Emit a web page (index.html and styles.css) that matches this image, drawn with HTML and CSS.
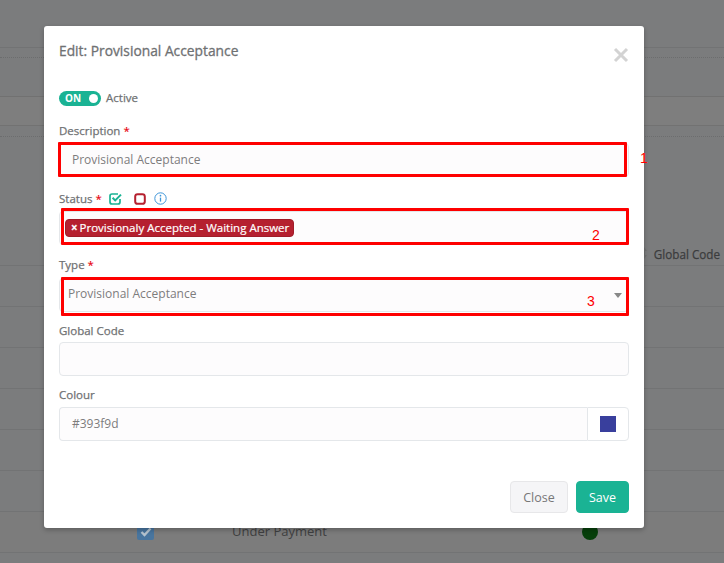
FILE: index.html
```html
<!DOCTYPE html>
<html lang="en">
<head>
<meta charset="utf-8">
<title>Edit: Provisional Acceptance</title>
<link rel="stylesheet" href="styles.css">
</head>
<body>
<div class="page">
  <div class="backdrop">
    <div class="band b1"></div>
    <div class="band b2"></div>
    <div class="band b3"></div>
    <div class="band b4"></div>
    <div class="band b5"></div>
    <div class="band b6">
      <svg class="sort" width="6" height="12" viewBox="0 0 6 12"><path d="M3 0l3 4H4v4h2l-3 4-3-4h2V4H0z" fill="#707172"/></svg>
      <span class="head-text">Global Code</span>
    </div>
    <div class="band row"></div>
    <div class="band row"></div>
    <div class="band row"></div>
    <div class="band row"></div>
    <div class="band row"></div>
    <div class="band row"></div>
    <div class="band row last">
      <span class="check"><svg width="12" height="10" viewBox="0 0 12 10"><path d="M1.5 5l3 3 6-6.5" fill="none" stroke="#b5c3cf" stroke-width="2.4"/></svg></span>
      <span class="row-text">Under Payment</span>
      <span class="dot"></span>
    </div>
  </div>

  <div class="modal">
    <header class="modal-head">
      <h1 class="modal-title">Edit: Provisional Acceptance</h1>
      <svg class="close-x" width="16" height="16" viewBox="0 0 16 16"><path d="M2 2l12 12M14 2L2 14" stroke="#d3d3d3" stroke-width="3" fill="none"/></svg>
    </header>
    <div class="toggle-row">
      <span class="toggle"><span class="toggle-on">ON</span><span class="toggle-knob"></span></span>
      <span class="toggle-label">Active</span>
    </div>

    <div class="field f-desc">
      <label class="label">Description <span class="req">*</span></label>
      <div class="input desc-input"><span class="value">Provisional Acceptance</span></div>
    </div>

    <div class="field f-status">
      <div class="label status-label">
        <span>Status <span class="req">*</span></span>
        <svg class="ico-check" width="13" height="13" viewBox="0 0 13 13"><path d="M11 7v3a2 2 0 0 1-2 2H3a2 2 0 0 1-2-2V4a2 2 0 0 1 2-2h6" fill="none" stroke="#1ab394" stroke-width="1.7"/><path d="M3.6 5.8l2.6 2.6L12 2.6" fill="none" stroke="#1ab394" stroke-width="2"/></svg>
        <svg class="ico-box" width="12" height="12" viewBox="0 0 12 12"><rect x="1.2" y="1.2" width="9.6" height="9.6" rx="2.4" fill="none" stroke="#b5202f" stroke-width="2"/></svg>
        <svg class="ico-info" width="13" height="13" viewBox="0 0 13 13"><circle cx="6.5" cy="6.5" r="5.7" fill="none" stroke="#3d95d8" stroke-width="1"/><path d="M6.5 5.6v4" stroke="#3d95d8" stroke-width="1.3" fill="none"/><circle cx="6.5" cy="3.7" r=".85" fill="#3d95d8"/></svg>
      </div>
      <div class="input tags"><span class="tag"><span class="tag-x">×</span>Provisionaly Accepted - Waiting Answer</span></div>
    </div>

    <div class="field f-type">
      <label class="label">Type <span class="req">*</span></label>
      <div class="input select"><span class="value">Provisional Acceptance</span><span class="caret"></span></div>
    </div>

    <div class="field f-global">
      <label class="label">Global Code</label>
      <div class="input"></div>
    </div>

    <div class="field f-colour">
      <label class="label">Colour</label>
      <div class="input-group">
        <div class="input grow"><span class="value">#393f9d</span></div>
        <div class="addon"><span class="swatch"></span></div>
      </div>
    </div>

    <footer class="modal-foot">
      <button class="btn btn-close" type="button">Close</button>
      <button class="btn btn-save" type="button">Save</button>
    </footer>
  </div>

  <div class="mark m1"></div>
  <div class="mark m2"></div>
  <div class="mark m3"></div>
  <span class="num n1">1</span>
  <span class="num n2">2</span>
  <span class="num n3">3</span>
</div>
</body>
</html>
```

FILE: styles.css
```css
* { box-sizing: border-box; }
html, body { margin: 0; padding: 0; }
body {
  width: 724px;
  height: 563px;
  overflow: hidden;
  font-family: "Open Sans", "Noto Sans", sans-serif;
  font-size: 12px;
  color: #676a6c;
}
.page { position: relative; width: 724px; height: 563px; overflow: hidden; background: #7b7c7d; }

/* dimmed table behind the dialog */
.backdrop { position: absolute; inset: 0; display: flex; flex-direction: column; }
.band { flex: none; border-bottom: 1px solid #727374; }
.b1 { height: 48px; }
.b2 { height: 10px; border-bottom: 1px dotted #6c6d6e; }
.b3 { height: 39px; border-bottom-color: #717171; }
.b4 { height: 29px; background: #7e7e7e; border-bottom-color: #727272; }
.b5 { height: 11px; border-bottom: 1px dotted #6c6d6e; }
.b6 {
  height: 129px;
  display: flex;
  justify-content: flex-end;
  align-items: flex-end;
  padding: 0 4px 2px 0;
  gap: 7px;
}
.head-text { font-size: 11.7px; font-weight: 500; -webkit-text-stroke: .25px #3b3c3d; color: #3b3c3d; line-height: 17px; }
.sort { margin-bottom: 4px; }
.row { height: 41px; }
.last {
  display: flex;
  align-items: flex-start;
  padding: 11px 0 0 137px;
  background: #7c7c7c;
}
.check {
  width: 17px;
  height: 17px;
  border-radius: 2px;
  background: #48759f;
  display: flex;
  align-items: center;
  justify-content: center;
}
.row-text { margin: -1px 0 0 78px; width: 350px; font-size: 13px; line-height: 18px; color: #3f4041; }
.dot { width: 16px; height: 16px; margin-top: 1px; border-radius: 50%; background: #063f0a; }

/* dialog */
.modal {
  position: absolute;
  left: 44px;
  top: 26px;
  width: 600px;
  height: 502px;
  padding: 0 15px;
  background: #fff;
  border-radius: 3px;
  box-shadow: 0 2px 5px rgba(0, 0, 0, .25);
  display: flex;
  flex-direction: column;
}
.modal-head {
  height: 46px;
  display: flex;
  justify-content: space-between;
  padding-top: 15px;
}
.modal-title { margin: 0; font-size: 13.8px; line-height: 20px; font-weight: 500; -webkit-text-stroke: .3px #6f7173; color: #6f7173; }
.close-x { margin: 6px 0 0 0; }

.toggle-row { margin-top: 18px; display: flex; align-items: center; gap: 5px; height: 16px; }
.toggle {
  width: 42px;
  height: 15px;
  border-radius: 8px;
  background: #1ab394;
  display: flex;
  align-items: center;
  justify-content: space-between;
  padding: 0 3px 0 6px;
}
.toggle-on { color: #fff; font-size: 10px; font-weight: 700; line-height: 15px; }
.toggle-knob { width: 9px; height: 9px; border-radius: 50%; background: #fff; }
.toggle-label { font-size: 11.5px; font-weight: 500; -webkit-text-stroke: .25px #6f7173; color: #6f7173; line-height: 16px; }

.field { display: flex; flex-direction: column; }
.label { font-size: 11.5px; font-weight: 500; -webkit-text-stroke: .25px #6f7173; line-height: 17px; color: #6f7173; display: block; }
.req { color: #e8101c; font-weight: 600; -webkit-text-stroke: 0; }
.f-desc { margin-top: 16px; }
.f-status { margin-top: 13px; }
.f-type { margin-top: 11px; }
.f-global { margin-top: 10px; }
.f-colour { margin-top: 10px; }
.f-desc .input { margin-top: 4px; }
.desc-input { padding-top: 5px; }
.f-status .input { margin-top: 4px; }
.f-type .input { margin-top: 5px; }
.f-global .input { margin-top: 3px; }
.f-colour .input-group { margin-top: 4px; }

.status-label { display: flex; align-items: center; }
.ico-check { margin-left: 7px; }
.ico-box { margin-left: 12px; }
.ico-info { margin-left: 8px; }

.input {
  height: 34px;
  border: 1px solid #e4e7ea;
  border-radius: 4px;
  background: #fdfcfd;
  display: flex;
  align-items: center;
  padding: 0 12px;
}
.value { font-size: 12px; color: #7d7d7d; line-height: 16px; }
.tags { padding: 0 5px; }
.tag {
  height: 18px;
  padding: 0 4px 0 5px;
  border: 1px solid #a01c29;
  border-radius: 4px;
  background: #b5202f;
  color: #fff;
  font-size: 11.5px;
  font-weight: 500;
  -webkit-text-stroke: .2px #fff;
  line-height: 16px;
  display: flex;
  align-items: center;
  white-space: nowrap;
}
.tag-x { font-weight: 700; margin-right: 2px; }
.select { justify-content: space-between; padding: 0 8px; }
.select .value { position: relative; top: -1px; }
.caret { width: 0; height: 0; border: 4px solid transparent; border-top: 5px solid #888; margin-top: 5px; margin-right: -2px; }

.input-group { display: flex; }
.grow { flex: 1; border-radius: 4px 0 0 4px; border-right: 0; }
.addon {
  width: 42px;
  height: 34px;
  border: 1px solid #e4e7ea;
  border-radius: 0 4px 4px 0;
  background: #fff;
  display: flex;
  align-items: center;
  justify-content: center;
}
.swatch { width: 16px; height: 16px; background: #393f9d; }

.modal-foot { margin-top: auto; padding-bottom: 15px; display: flex; justify-content: flex-end; gap: 8px; }
.btn {
  height: 32px;
  border-radius: 4px;
  font-family: inherit;
  font-size: 12.5px;
  font-weight: 400;
  padding: 0;
}
.btn-close { width: 58px; background: #f5f5f7; border: 1px solid #e7e7e9; color: #777; }
.btn-save { width: 53px; background: #1ab394; border: 1px solid #1ab394; color: #fff; }

/* red review annotations */
.mark { position: absolute; border: 3px solid #fe0000; border-radius: 1px; }
.m1 { left: 58px; top: 142px; width: 569px; height: 35px; }
.m2 { left: 61px; top: 208px; width: 568px; height: 37px; }
.m3 { left: 61px; top: 277px; width: 568px; height: 39px; }
.num { position: absolute; color: #fe0000; font-family: "Liberation Sans", sans-serif; font-size: 14px; line-height: 16px; }
.n1 { left: 640px; top: 150px; }
.n2 { left: 592px; top: 227px; }
.n3 { left: 587px; top: 293px; }
```
